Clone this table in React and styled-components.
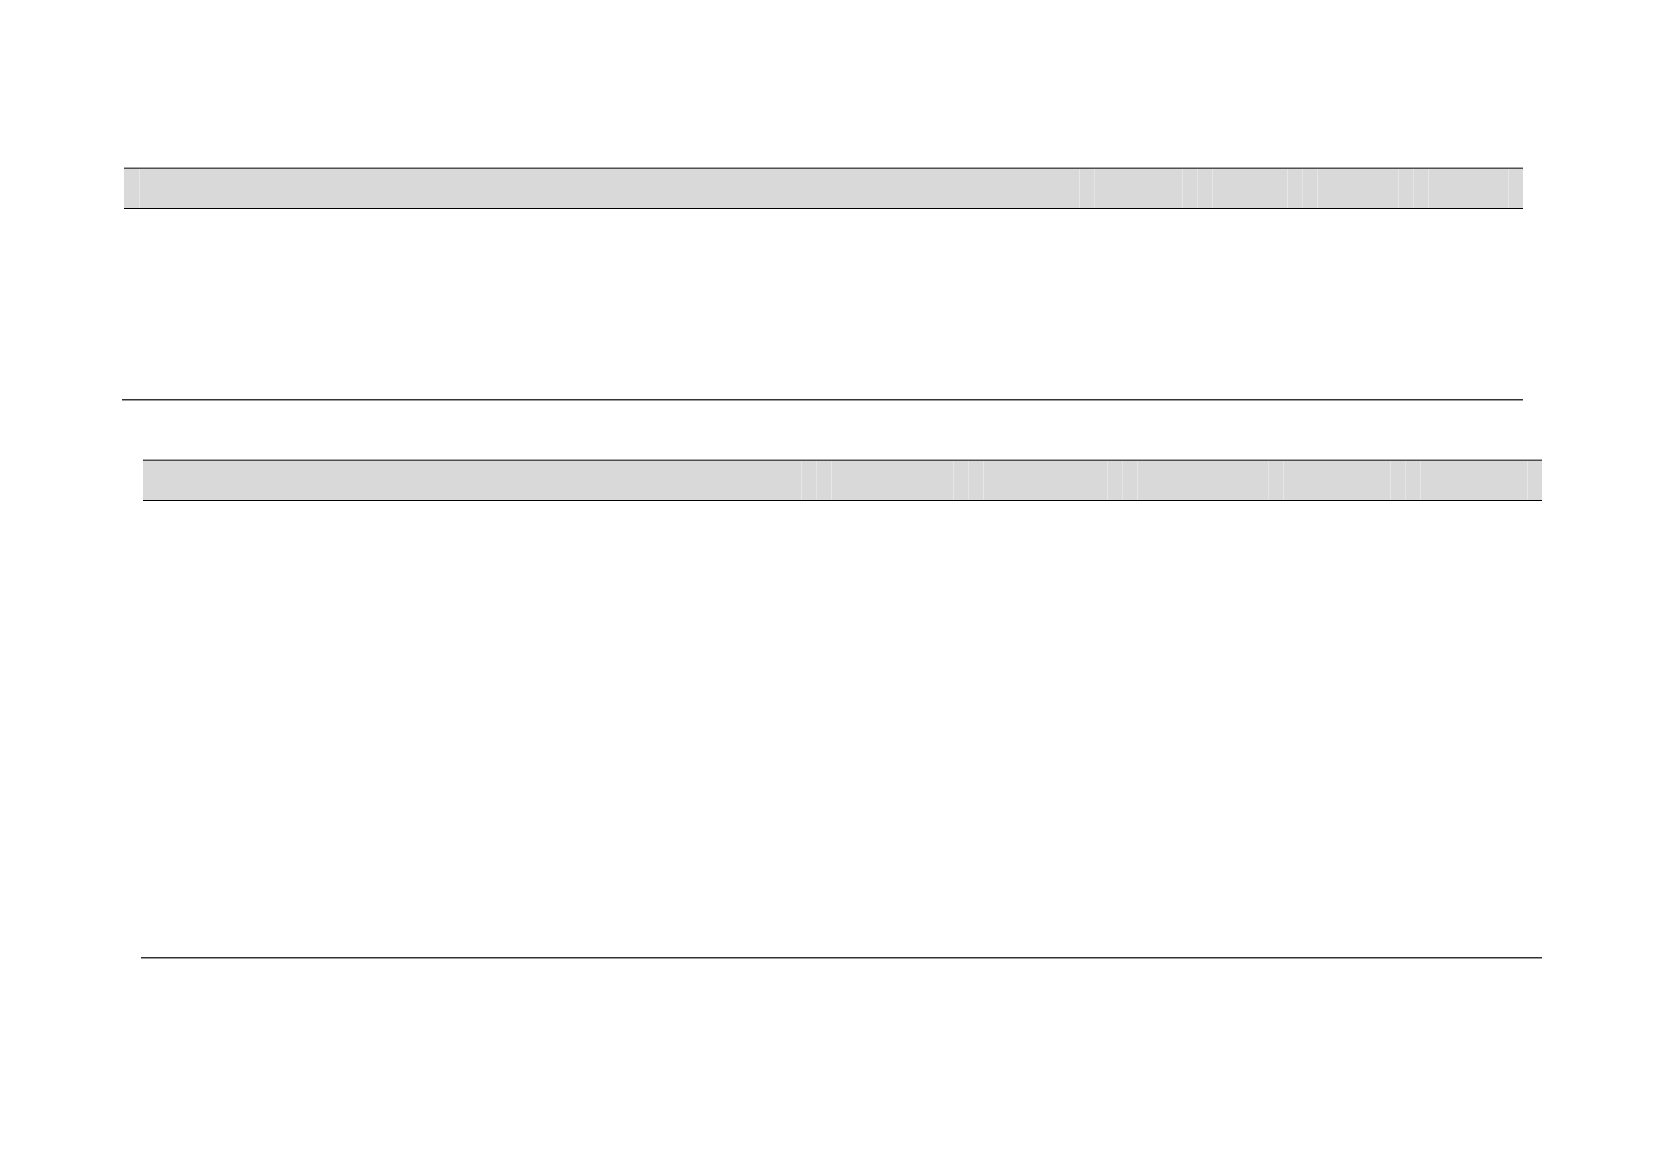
import React from "react";
import styled, { createGlobalStyle } from "styled-components";

const Global = createGlobalStyle`
  html, body { margin: 0; padding: 0; background: #ffffff; }
  body { font-family: "Liberation Sans", Arial, sans-serif; }
`;

const Page = styled.div`
  width: 1666px;
  min-height: 1174px;
  box-sizing: border-box;
  padding-top: 168px;
  display: flex;
  flex-direction: column;
  background: #fff;
`;

const TableBlock = styled.section`
  margin-left: ${(p) => p.$left}px;
  margin-top: ${(p) => p.$top || 0}px;
  width: ${(p) => p.$width}px;
  display: flex;
  flex-direction: column;
`;

const HeaderRow = styled.div`
  margin-left: 2px;
  display: flex;
  height: 39px;
  background: #d9d9d9;
  border-top: 1px solid #4f4f4f;
  border-bottom: 1px solid #000;
  box-shadow: 0 -1px 0 #a8a8a8;
`;

const HeaderCell = styled.div`
  width: ${(p) => p.$w}px;
  box-sizing: border-box;
  display: flex;
  padding: 0 14px;
  border-left: ${(p) => (p.$first ? "none" : "1px solid #e4e4e4")};
  padding-left: ${(p) => (p.$first ? 15 : 14)}px;
`;

const CellPad = styled.div`
  flex: 1;
  border-left: ${(p) => (p.$l ? "1px solid #e6e6e6" : "1px solid transparent")};
  border-right: ${(p) => (p.$r ? "1px solid #e6e6e6" : "1px solid transparent")};
`;

const Body = styled.div`
  height: ${(p) => p.$h}px;
  border-bottom: 1px solid #333;
  box-shadow: 0 1px 0 #9a9a9a;
`;

const table1 = [
  { w: 970, l: true, r: true },
  { w: 103, l: false, r: true },
  { w: 105, l: true, r: true },
  { w: 111, l: true, r: true },
  { w: 110, l: true, r: true },
];

const table2 = [
  { w: 673, l: false, r: true },
  { w: 152, l: true, r: true },
  { w: 154, l: true, r: true },
  { w: 146, l: true, r: false },
  { w: 137, l: true, r: true },
  { w: 137, l: true, r: true },
];

function Table({ cols, left, top, width, bodyHeight }) {
  return (
    <TableBlock $left={left} $top={top} $width={width}>
      <HeaderRow>
        {cols.map((c, i) => (
          <HeaderCell key={i} $w={c.w} $first={i === 0}>
            <CellPad $l={c.l} $r={c.r} />
          </HeaderCell>
        ))}
      </HeaderRow>
      <Body $h={bodyHeight} />
    </TableBlock>
  );
}

export default function App() {
  return (
    <>
      <Global />
      <Page>
        <Table cols={table1} left={122} width={1401} bodyHeight={190} />
        <Table cols={table2} left={141} top={60} width={1401} bodyHeight={456} />
      </Page>
    </>
  );
}
